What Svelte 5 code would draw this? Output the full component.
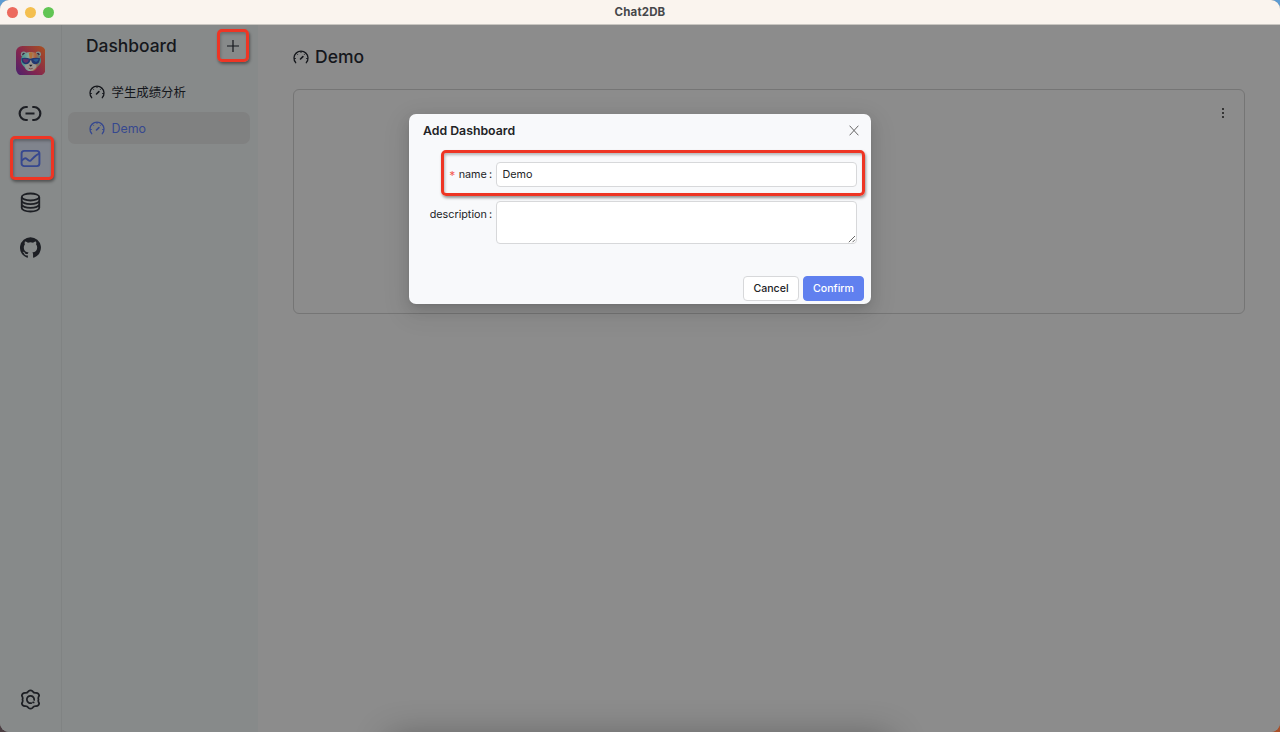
<script>
  const boards = [
    { name: '学生成绩分析', active: false },
    { name: 'Demo', active: true }
  ];
  let name = $state('Demo');
  let description = $state('');
</script>

{#snippet gauge()}
  <svg class="gauge" viewBox="0 0 16 16" fill="none" stroke="currentColor" stroke-width="1.3" stroke-linecap="round">
    <path d="M2.700 13.700A7 7 0 1 1 13.300 13.700" />
    <path d="M8 2.600v1M3.800 4.700l.7.700M12.200 4.700l-.7.700M1.500 9.500h.9M13.600 9.500h.9" stroke-width="1" />
    <path d="M7.500 10l2.400-2.400" stroke-width="1.600" />
  </svg>
{/snippet}

<div class="desktop">
  <div class="window">
    <header class="titlebar">
      <div class="lights"><i class="close"></i><i class="min"></i><i class="max"></i></div>
      <span class="apptitle">Chat2DB</span>
    </header>
    <div class="body">
      <nav class="rail">
        <svg class="logo" viewBox="0 0 30 30">
          <defs>
            <linearGradient id="lg" x1="0" y1="1" x2="1" y2="0.15">
              <stop offset="0" stop-color="#49216f" />
              <stop offset=".45" stop-color="#83254f" />
              <stop offset="1" stop-color="#a54c24" />
            </linearGradient>
            <linearGradient id="fur" x1="0" y1="0" x2="1" y2="0">
              <stop offset="0" stop-color="#3b9290" />
              <stop offset=".45" stop-color="#93a79a" />
              <stop offset=".7" stop-color="#b5603b" />
              <stop offset="1" stop-color="#348c94" />
            </linearGradient>
          </defs>
          <rect width="30" height="30" rx="6.5" fill="url(#lg)" />
          <circle cx="7.8" cy="8.3" r="2.800" fill="#7d918f" />
          <circle cx="22.6" cy="8.3" r="2.800" fill="#7d918f" />
          <circle cx="8" cy="8.5" r="1.6" fill="#39263f" />
          <circle cx="22.3" cy="8.5" r="1.6" fill="#39263f" />
          <path d="M5 15c0-5.500 4-9 10-9s10.500 3.500 10.500 9c0 2-1.500 4.500-4 6.500-1.200 2.700-3.500 4-6.500 4s-5.200-1.300-6.300-4C6.300 19.500 5 17 5 15z" fill="url(#fur)" />
          <path d="M12 16l3-3 3 3 3 4c-.5 3-3 4.500-6 4.500S9.500 23 9 20z" fill="#99958f" />
          <path d="M13 7l2-1 2 1-1 6h-2z" fill="#b0713a" />
          <path d="M5.500 12.500c3-1 6-.5 9 .5 3-1 7-1.500 10-.5-.3 4-2 6-4.500 6-2.600 0-4-1.500-4.600-4h-.8c-.6 2.500-2 4-4.600 4-2.700 0-4.500-2-4.500-6z" fill="#23366f" />
          <path d="M7 13.500c2-.6 4-.4 6 .3-.5 2-1.500 3.200-3 3.200s-2.800-1.500-3-3.500z" fill="#653068" />
          <path d="M17 14c2-.7 4-.9 6-.5-.4 1.500-1.300 2.500-2.700 2.700z" fill="#285c91" />
          <path d="M13.200 19h3.600L15 21.200z" fill="#1d1d29" />
          <path d="M13 22.700q2 1.200 4 0" fill="none" stroke="#6f3b36" stroke-width=".8" />
        </svg>
        <div class="navitem link">
          <svg viewBox="0 0 24 24" fill="none" stroke="currentColor" stroke-width="2.300">
            <path d="M9.600 5.200H7.700a6.500 6.800 0 0 0 0 13.600h1.900M14.400 5.200h1.900a6.500 6.800 0 0 1 0 13.600h-1.900M7.300 12h9.400" />
          </svg>
        </div>
        <div class="navitem selected">
          <svg viewBox="0 0 24 24" fill="none" stroke="currentColor" stroke-width="2.200" stroke-linejoin="round">
            <rect x="1.800" y="3.300" width="20.400" height="17.400" rx="3" />
            <path d="M2 14.300l2.600-2.100q1.600-1.200 3 .1l2 1.700q1.500 1.200 3-.1l4-3.900q2.200-2.200 5.200-3.500" />
          </svg>
        </div>
        <div class="navitem">
          <svg viewBox="0 0 24 24" fill="none" stroke="currentColor" stroke-width="2.100">
            <ellipse cx="12" cy="5.700" rx="10" ry="4" />
            <path d="M2 5.700v12.600c0 2.200 4.500 4 10 4s10-1.800 10-4V5.700M2 9.900c0 2.200 4.500 4 10 4s10-1.800 10-4M2 14.100c0 2.200 4.500 4 10 4s10-1.800 10-4" />
          </svg>
        </div>
        <div class="navitem">
          <svg viewBox="0 0 24 24" fill="currentColor">
            <path d="M12 .3a12 12 0 0 0-3.800 23.380c.6.120.83-.26.830-.57L9 21.070c-3.340.720-4.040-1.610-4.040-1.610-.55-1.390-1.340-1.760-1.340-1.760-1.080-.74.090-.73.090-.73 1.200.090 1.840 1.240 1.840 1.240 1.070 1.830 2.810 1.300 3.500 1 .1-.78.420-1.310.760-1.610-2.670-.3-5.470-1.330-5.470-5.930 0-1.310.470-2.380 1.240-3.220-.14-.3-.54-1.520.1-3.180 0 0 1-.32 3.300 1.230a11.500 11.500 0 0 1 6 0c2.280-1.550 3.290-1.230 3.290-1.230.640 1.660.240 2.880.120 3.180a4.650 4.650 0 0 1 1.230 3.220c0 4.610-2.800 5.630-5.480 5.920.42.360.810 1.100.810 2.220l-.01 3.290c0 .31.2.690.820.570A12 12 0 0 0 12 .3" />
          </svg>
        </div>
        <div class="navitem settings">
          <svg viewBox="0 0 24 24" fill="none" stroke="currentColor" stroke-width="2" stroke-linejoin="round">
            <path d="M9.700 2.500Q12 .5 14.300 2.500Q15.900 4.900 18.400 4.500Q21.500 4.700 21.900 7.700Q20.300 10 21.200 12Q20.300 14 21.900 16.300Q21.500 19.300 18.400 19.500Q15.900 19.100 14.300 21.500Q12 23.500 9.700 21.500Q8.100 19.100 5.600 19.500Q2.500 19.300 2.100 16.300Q3.700 14 2.800 12Q3.700 10 2.100 7.700Q2.500 4.700 5.600 4.500Q8.100 4.900 9.700 2.500Z" />
            <path d="M13.500 15.900A4.200 4.200 0 1 1 16 13.300" />
            <path d="M14.900 15.300h.7" stroke-width="2" stroke-linecap="round" />
          </svg>
        </div>
      </nav>

      <aside class="list">
        <div class="listhead">
          <h2>Dashboard</h2>
          <div class="add">
            <svg viewBox="0 0 14 14" stroke="currentColor" stroke-width="1.200"><path d="M7 1v12M1 7h12" /></svg>
          </div>
        </div>
        {#each boards as board}
          <div class="board" class:active={board.active}>
            {@render gauge()}
            <span>{board.name}</span>
          </div>
        {/each}
      </aside>

      <main>
        <h1>{@render gauge()}<span>Demo</span></h1>
        <section class="card">
          <div class="more"><i></i><i></i><i></i></div>
        </section>
      </main>
    </div>
  </div>

  <div class="dock"></div>

  <div class="modal">
    <div class="modalhead">
      <h3>Add Dashboard</h3>
      <svg class="x" viewBox="0 0 10 10" stroke="currentColor" stroke-width="1"><path d="M.6.2l8.800 9.600M9.400.2L.6 9.800" /></svg>
    </div>
    <div class="namerow">
      <label for="name"><b>*</b>name<em>:</em></label>
      <input id="name" bind:value={name} />
    </div>
    <div class="descrow">
      <label for="desc">description<em>:</em></label>
      <div class="area">
        <textarea id="desc" bind:value={description}></textarea>
        <svg class="grip" viewBox="0 0 8 8" stroke="#555" stroke-width=".9"><path d="M.8 7.200L7 1M4.500 7.200L7 4.700" /></svg>
      </div>
    </div>
    <div class="actions">
      <button>Cancel</button>
      <button class="primary">Confirm</button>
    </div>
  </div>
</div>

<style>
  * { box-sizing: border-box; }
  h1, h2, h3 { margin: 0; }
  .desktop {
    width: 1280px;
    height: 732px;
    position: relative;
    overflow: hidden;
    background: linear-gradient(90deg, #4a3d42 0 50%, #a8502a 50%);
    font-family: Inter, "Noto Sans CJK SC", sans-serif;
    color: #15171c;
  }
  .desktop::before {
    content: '';
    position: absolute;
    inset: 0 0 auto;
    height: 20px;
    background: #5c9bd2;
  }
  .window {
    position: relative;
    height: 732px;
    display: flex;
    flex-direction: column;
    border-radius: 9px;
    overflow: hidden;
    background: #8c8c8c;
  }
  .titlebar {
    height: 25px;
    flex: none;
    display: grid;
    grid-template-columns: 1fr auto 1fr;
    align-items: center;
    background: #faf4ee;
    border-bottom: 1px solid #c9c6c1;
  }
  .lights { display: flex; gap: 7px; padding-left: 6.500px; }
  .lights i { width: 11px; height: 11px; border-radius: 50%; }
  .close { background: #ec6a5e; }
  .min { background: #f4bf4f; }
  .max { background: #61c554; }
  .apptitle { font-size: 11.500px; font-weight: 700; color: #46474a; letter-spacing: .15px; }
  .body { flex: 1; display: flex; min-height: 0; }
  .rail {
    width: 62px;
    background: #878a8a;
    border-right: 1px solid #808383;
    display: flex;
    flex-direction: column;
    align-items: center;
    padding: 20.500px 0 19.500px 0;
  }
  .logo { width: 29.500px; height: 29.500px; margin-bottom: 16.500px; flex: none; }
  .navitem {
    width: 44px;
    height: 44.500px;
    flex: none;
    display: flex;
    align-items: center;
    justify-content: center;
    color: #1d1f24;
  }
  .navitem svg { width: 21px; height: 21px; margin-right: 1px; }
  .navitem.link svg { width: 24px; height: 23px; }
  .navitem.selected {
    height: 44px;
    margin: 0 0 .5px 2px;
    border: 3px solid #ee3524;
    border-radius: 5px;
    background: #80848d;
    color: #36488f;
    box-shadow: 1px 2px 3px #0006, inset 1px 2px 3px #0004;
  }
  .navitem.selected svg { margin-right: 3px; }
  .settings { margin-top: auto; height: 26px; }
  .list { width: 196px; padding: 4px 8px 0 6px; background: #878a8a; }
  .listhead {
    display: flex;
    justify-content: space-between;
    padding: 0 1px 0 18px;
    height: 47px;
  }
  h2 { font-size: 17.400px; font-weight: 500; line-height: 34px; }
  .add {
    width: 32px;
    height: 33px;
    border: 3px solid #ee3524;
    border-radius: 5px;
    display: flex;
    align-items: center;
    justify-content: center;
    box-shadow: 1px 2px 3px #0006, inset 1px 2px 3px #0003;
  }
  .add svg { width: 14px; height: 14px; }
  .board {
    height: 32px;
    margin-bottom: 4px;
    padding-left: 21px;
    display: flex;
    align-items: center;
    gap: 6.500px;
    border-radius: 7px;
    font-size: 12.400px;
  }
  .board span { line-height: 16px; padding-top: 2px; }
  .board.active { background: #808181; color: #36488f; }
  .board.active span { padding-top: 1px; }
  .gauge { width: 16px; height: 16px; flex: none; }
  main { flex: 1; padding: 19px 36px 0 35px; background: #8c8c8c; }
  h1 {
    display: flex;
    align-items: center;
    gap: 6px;
    height: 25px;
    font-size: 17.500px;
    font-weight: 500;
  }
  h1 span { line-height: 24px; padding-top: 1px; }
  .card {
    height: 225px;
    margin-top: 20px;
    margin-right: -.5px;
    border: 1px solid #757575;
    border-radius: 6px;
    display: flex;
    justify-content: flex-end;
    padding: 18px 19.500px;
  }
  .more { display: flex; flex-direction: column; gap: 2px; }
  .more i { width: 2px; height: 2px; background: #353535; }
  .dock {
    position: absolute;
    left: 395px;
    top: 744px;
    width: 490px;
    height: 40px;
    box-shadow: 0 0 36px 6px #0005;
  }
  .modal {
    position: absolute;
    left: 409px;
    top: 114px;
    width: 462px;
    height: 190px;
    border-radius: 7px;
    background: #f8f9fb;
    box-shadow: 0 5px 14px #0000001f, 0 2px 5px -3px #0000001f, 0 8px 25px 7px #0000000f;
    font-size: 10.800px;
    display: flex;
    flex-direction: column;
    color: #222326;
  }
  .modalhead {
    height: 36px;
    padding: 0 12px 2px 14px;
    display: flex;
    align-items: center;
    justify-content: space-between;
  }
  h3 { font-size: 12.300px; font-weight: 600; line-height: 14px; padding-bottom: 1px; }
  .x { width: 10px; height: 11px; color: #666; margin-bottom: 1px; }
  .namerow {
    width: 424px;
    height: 46px;
    margin-left: 32px;
    border: 3px solid #ee3524;
    border-radius: 5px;
    display: flex;
    align-items: center;
    justify-content: flex-end;
    padding: 2px 5px 0 0;
    box-shadow: 1px 2px 3px #0006, inset 1px 2px 3px #0004;
  }
  label { display: flex; justify-content: flex-end; line-height: 14px; }
  label em { font-style: normal; margin: 0 0 0 2px; }
  label b { font-size: 12px; font-weight: 400; color: #f45b55; margin-right: 3.500px; line-height: 15px; }
  input, textarea {
    display: block;
    font: inherit;
    color: inherit;
    background: #fff;
    border: 1px solid #d7d8da;
    border-radius: 4px;
    padding: 0 6px;
    outline: none;
  }
  .namerow label { margin-right: 3.500px; padding-top: 2.500px; }
  input { width: 361.500px; height: 25px; }
  .descrow { display: flex; margin-top: 5px; }
  .descrow label { width: 83px; margin-right: 3.500px; padding-top: 6.500px; }
  .area { position: relative; }
  textarea { width: 361.500px; height: 43px; resize: none; }
  .grip { position: absolute; width: 8px; height: 8px; right: 1px; bottom: 1px; }
  .actions { display: flex; justify-content: flex-end; gap: 4px; padding: 32px 7px 0 0; }
  button {
    width: 56px;
    height: 25px;
    padding: 0 0 1px;
    font: 500 10.600px Inter, sans-serif;
    color: #222326;
    background: #fff;
    border: 1px solid #d7d8da;
    border-radius: 4px;
  }
  .primary { width: 61px; background: #6080ef; border-color: #6080ef; color: #fff; }
</style>
